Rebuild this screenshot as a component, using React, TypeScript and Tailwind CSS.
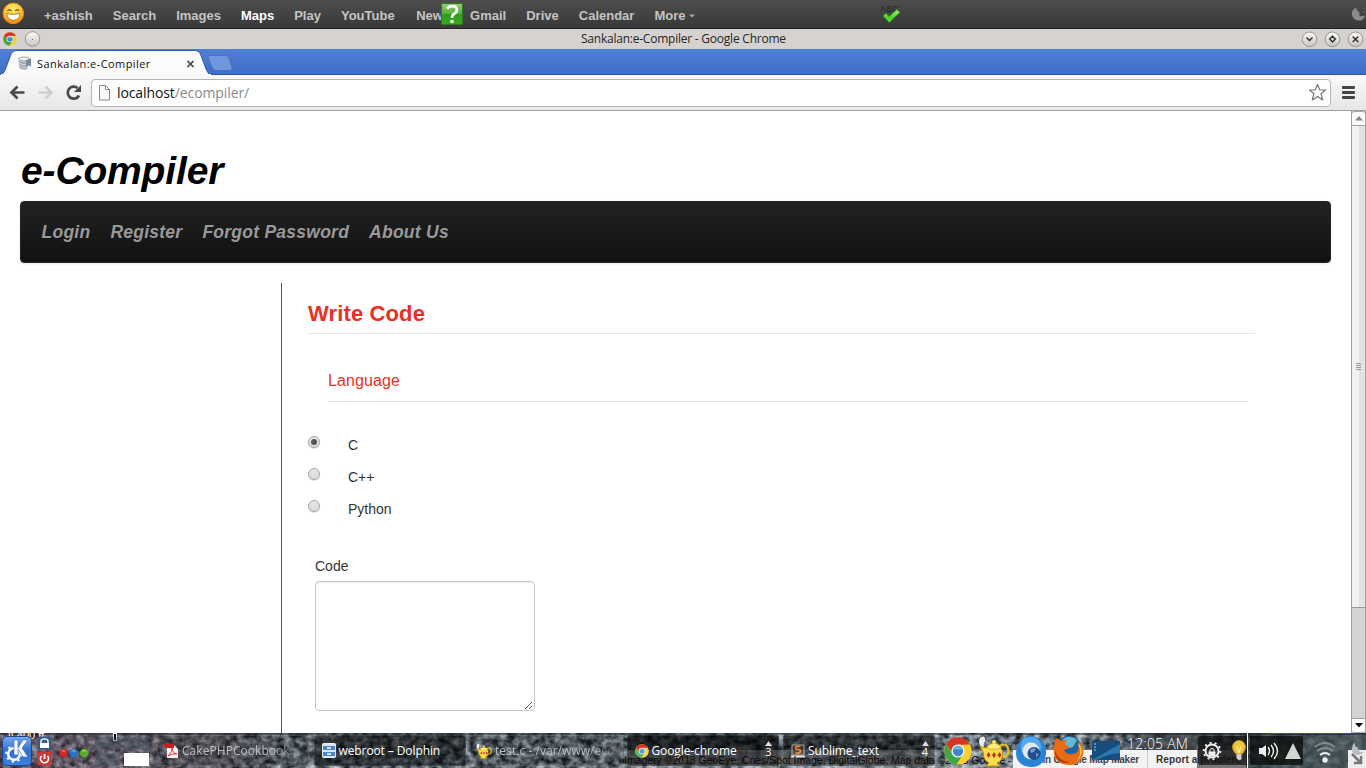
import React from "react";

const ubuntu = "font-['Open_Sans','Noto_Sans',sans-serif]";

function ChromeLogo({ size }: { size: number }) {
  return (
    <svg width={size} height={size} viewBox="0 0 28 28" className="block shrink-0">
      <circle cx="14" cy="14" r="13.6" fill="#fbd02c" />
      <path d="M2.2 7.2 A13.6 13.6 0 0 0 12.5 27.5 L19 17.5 L8.5 17Z" fill="#3fa648" />
      <path d="M2.2 7.2 L8 15.5 L10 10 L14 7.8 L26 7.5 A13.6 13.6 0 0 0 2.2 7.2Z" fill="#d8352a" />
      <circle cx="14" cy="14" r="6.6" fill="#f4f6f8" />
      <circle cx="14" cy="14" r="5.2" fill="#3c86c8" />
      <path d="M9.5 12.5 A4.8 4.8 0 0 1 18.5 12.5Z" fill="#78b3e2" />
    </svg>
  );
}

const googleLinks = ["+ashish", "Search", "Images", "Maps", "Play", "YouTube", "News", "Gmail", "Drive", "Calendar"];

function GoogleBar() {
  return (
    <div className="relative flex h-[29px] shrink-0 items-center border-b border-[#222] bg-linear-to-b from-[#4d4d4d] to-[#393939] pt-[3px] pl-[44px] font-['Liberation_Sans',sans-serif] text-[13px] font-bold text-[#c4c4c4]">
      <svg className="absolute top-[2px] left-[2px]" width="23" height="23" viewBox="0 0 23 23">
        <defs>
          <radialGradient id="smile" cx=".5" cy=".3" r=".7">
            <stop offset="0" stopColor="#fff06e" />
            <stop offset=".65" stopColor="#ffc02e" />
            <stop offset="1" stopColor="#ee7708" />
          </radialGradient>
        </defs>
        <circle cx="11.3" cy="11.4" r="10.3" fill="url(#smile)" stroke="#ef8a16" />
        <path d="M5.5 8.8q2-2.2 4 0M13.3 8.8q2-2.2 4 0" fill="none" stroke="#6f3c09" strokeWidth="1.1" />
        <path d="M4.7 11.5q6.7 1.8 13.4 0q-.8 6.7-6.7 6.7T4.7 11.5Z" fill="#fff" stroke="#9a6a20" strokeWidth=".8" />
      </svg>
      <nav className="flex gap-5 leading-[15px]">
        {googleLinks.map((t) => (
          <a key={t} className={t === "Maps" ? "text-white" : t === "News" ? "ml-[1.500px]" : ""}>{t}</a>
        ))}
        <a className="flex items-center gap-1">
          More
          <svg width="6" height="4" viewBox="0 0 6 4" className="mt-px"><path d="M0 0.5h6L3 3.5Z" fill="#aaa" /></svg>
        </a>
      </nav>
      <svg className="absolute top-[3px] left-[441px]" width="22" height="22" viewBox="0 0 22 22">
        <defs>
          <linearGradient id="help" x1="0" y1="0" x2="0" y2="1">
            <stop offset="0" stopColor="#91cc77" />
            <stop offset=".5" stopColor="#55ae39" />
            <stop offset=".52" stopColor="#319b1d" />
            <stop offset="1" stopColor="#35ad17" />
          </linearGradient>
        </defs>
        <rect x=".5" y=".5" width="21" height="21" rx="1" fill="url(#help)" stroke="#2b7a1c" />
        <path d="M6 5.5Q8 3.2 11.5 3.2Q16 3.2 16 7Q16 9 13.4 10.7Q11 12.2 11 15" fill="none" stroke="#fff" strokeWidth="2.7" />
        <rect x="9.4" y="17" width="3.2" height="3" fill="#fff" />
      </svg>
      <div className="absolute top-[4px] left-[880px] text-[9px] leading-[10px] font-normal tracking-[0.4px] text-[#262626]">ABC</div>
      <svg className="absolute top-[8px] left-[882px]" width="19" height="16" viewBox="0 0 19 16">
        <defs>
          <linearGradient id="tick" x1="0" y1="0" x2="0" y2="1"><stop stopColor="#b7f08a" /><stop offset=".6" stopColor="#4ed02a" /><stop offset="1" stopColor="#6ee03c" /></linearGradient>
        </defs>
        <path d="M1 8L4 5.2L7 8.5L15 1.5L18 4.4L7.3 14.6Z" fill="url(#tick)" stroke="#2b9914" />
      </svg>
      <svg className="absolute top-[6px] left-[1351px]" width="15" height="16" viewBox="0 0 15 16">
        <path d="M5 1.5Q0 4 1 9.5Q3.5 15 9 14.5Q13 13.8 14 9.5Q10 11.2 8 9Q9.5 7 7 5Q5 3.5 5 1.5Z" fill="#8b8b8b" />
        <path d="M7 2h1M9.5 1.8h1M12 2.5h1M13.5 5v2" stroke="#666" />
      </svg>
    </div>
  );
}

function WindowButton({ d }: { d: string }) {
  return (
    <svg width="17" height="17" viewBox="0 0 17 17" className="block">
      <defs>
        <linearGradient id="btn" x1="0" y1="0" x2="0" y2="1">
          <stop offset="0" stopColor="#fafafa" />
          <stop offset="1" stopColor="#c9c6c3" />
        </linearGradient>
      </defs>
      <circle cx="8.5" cy="8.3" r="7.3" fill="url(#btn)" stroke="#8d8a87" strokeWidth=".9" />
      <path d={d} fill="none" stroke="#2d2d2d" strokeWidth="1.4" />
    </svg>
  );
}

function TitleBar() {
  return (
    <div className={`relative flex h-[20px] shrink-0 items-center bg-[#d6d2cf] ${ubuntu}`}>
      <div className="flex w-[581px] items-center gap-[7px] pl-[3px]">
        <ChromeLogo size={14} />
        <svg width="17" height="17" viewBox="0 0 17 17" className="block">
          <circle cx="8.5" cy="8" r="7.3" fill="url(#btn)" stroke="#8d8a87" strokeWidth=".9" />
          <rect x="8" y="8" width="1" height="1" fill="#666" />
        </svg>
      </div>
      <div className="w-[720px] text-[12px] leading-[20px] tracking-[-0.23px] text-[#262626]">Sankalan:e-Compiler - Google Chrome</div>
      <div className="flex gap-[6px]">
        <WindowButton d="M5.5 6.500l3 3l3-3" />
        <WindowButton d="M8.5 5.300L11.3 8.100L8.5 10.900L5.7 8.100Z" />
        <WindowButton d="M5.7 5.400l5.6 5.6M11.3 5.400l-5.6 5.6" />
      </div>
    </div>
  );
}

function TabStrip() {
  return (
    <div className="relative h-[26px] shrink-0 bg-linear-to-b from-[#5181d5] to-[#3e6cc9]">
      <svg className="block" width="1366" height="26" viewBox="0 0 1366 26">
        <path d="M0 25.5H1366" stroke="#2c55a3" />
        <path d="M0 26Q4 25 5.5 20L11 5Q12.5 1.5 16 1.5H195Q199 1.5 200.5 5L206 20Q208 26 212 26Z" fill="#fbfbfb" stroke="#34589c" />
        <path d="M1 26H211" stroke="#f7f7f7" strokeWidth="2" />
        <path d="M210 6.5H226Q228 6.5 229 9L232 18Q233 21.5 230 21.5H216Q213.500 21.500 212.500 19L208 9Q207 6.500 210 6.500Z" fill="#7097dc" stroke="#4a70b6" />
        <g transform="translate(17 7)">
          <path d="M2 3V11Q5 14 10 13L12 10V3Z" fill="#c9d2d9" />
          <ellipse cx="7" cy="3" rx="5.500" ry="2" fill="#eef2f5" stroke="#93a4b1" />
          <path d="M1.500 5.500Q5 8 9 7M2 8.500Q5 11 9 10M2.500 11.500Q6 14 10 12.500" stroke="#7e909e" fill="none" />
          <path d="M9 4L14 2.500V11L12 9L9 11Z" fill="#778b9b" />
        </g>
        <path d="M187.500 12l6 6M193.500 12l-6 6" stroke="#454545" strokeWidth="1.700" />
      </svg>
      <div className={`absolute top-[6px] left-[37px] text-[11px] leading-[18px] tracking-[0.42px] text-[#111] ${ubuntu}`}>Sankalan:e-Compiler</div>
    </div>
  );
}

function Toolbar() {
  return (
    <div className="flex h-[36px] shrink-0 items-center border-b border-[#a0a0a0] bg-linear-to-b from-[#f8f8f8] to-[#e7e7e7]">
      <svg width="91" height="35" viewBox="0 0 91 35" className="block shrink-0" fill="none" strokeWidth="2.700">
        <path d="M24.500 17.500H12M17.500 11.500L11.500 17.500L17.500 23.500" stroke="#494949" />
        <path d="M38.500 17.500H51M45.500 11.500L51.500 17.500L45.500 23.500" stroke="#cfcfcf" />
        <path d="M79 20.500A6 6 0 1 1 77.500 13" stroke="#494949" />
        <path d="M81 10V17H74Z" fill="#494949" />
      </svg>
      <div className="flex h-[28px] w-[1240px] items-center rounded-[4px] border border-[#b6b6b6] bg-white">
        <svg width="25" height="26" viewBox="0 0 25 26" className="block shrink-0">
          <path d="M7.500 5.500h6l4 4v10.500h-10ZM13.500 5.500v4h4" fill="#fafafa" stroke="#868686" />
        </svg>
        <div className={`w-[1191px] text-[14px] leading-[24px] tracking-[-0.1px] text-[#8a8a8a] ${ubuntu}`}>
          <span className="text-[#111]">localhost</span>/ecompiler/
        </div>
        <svg width="19" height="19" viewBox="0 0 19 19" className="block shrink-0">
          <path d="M9.500 1.500L11.800 7H17.500L13 10.700L14.700 17L9.500 13.400L4.300 17L6 10.700L1.500 7H7.200Z" fill="#fff" stroke="#777" strokeWidth="1.200" strokeLinejoin="round" />
        </svg>
      </div>
      <div className="ml-[11px] flex w-[13px] flex-col gap-[2px]">
        <div className="h-[3px] rounded-[1px] bg-[#444]" />
        <div className="h-[3px] rounded-[1px] bg-[#444]" />
        <div className="h-[3px] rounded-[1px] bg-[#444]" />
      </div>
    </div>
  );
}

function Radio({ label, on }: { label: string; on?: boolean }) {
  return (
    <label className="flex h-[32px] text-[14px] leading-[20px] text-[#333]">
      <span className="mt-[3px] mr-[28px] flex size-[12px] items-center justify-center rounded-full border border-[#a5a5a5] bg-linear-to-b from-[#e6e6e6] to-[#dadada] shadow-[0_1px_1px_#ddd]">
        {on && <span className="size-[6px] rounded-full bg-[#555]" />}
      </span>
      <span className="mt-[2px]">{label}</span>
    </label>
  );
}

function Page() {
  return (
    <main className="flex h-full w-[1351px] flex-col overflow-hidden bg-white px-5 font-['Liberation_Sans',sans-serif]">
      <h1 className="mt-[39px] h-[51px] pl-px text-[39px] leading-[42px] font-bold tracking-[-0.15px] italic text-black">e-Compiler</h1>
      <nav className="flex h-[62px] shrink-0 items-center gap-5 rounded-[4px] border border-[#252525] bg-linear-to-b from-[#222] to-[#111] pt-px pl-[20.5px] text-[17.5px] font-bold italic tracking-[0.25px] text-[#999] shadow-[0_1px_3px_rgba(0,0,0,0.1)]">
        <a>Login</a><a>Register</a><a>Forgot Password</a><a>About Us</a>
      </nav>
      <section className="mt-5 ml-[261px] flex h-[450px] shrink-0 flex-col border-l border-[#555] pl-[26px]">
        <h2 className="mt-[10px] h-[41px] w-[947px] border-b border-[#e5e5e5] text-[22px] leading-[42px] font-bold tracking-[0.13px] text-[#ee2e22]">Write Code</h2>
        <h3 className="mt-[27px] ml-5 h-[41px] w-[920px] border-b border-[#e5e5e5] text-[16px] leading-[40px] tracking-[0.1px] text-[#ee2e22]">Language</h3>
        <div className="mt-[31px] flex flex-col">
          <Radio label="C" on />
          <Radio label="C++" />
          <Radio label="Python" />
        </div>
        <div className="mt-[27px] ml-[7px] flex flex-col text-[14px] leading-[20px] text-[#333]">
          <label>Code</label>
          <div className="mt-[5px] flex h-[130px] w-[220px] items-end justify-end rounded-[4px] border border-[#c6c6c6] bg-white shadow-[inset_0_1px_1px_rgba(0,0,0,0.075)]">
            <svg width="9" height="9" viewBox="0 0 9 9"><path d="M0 8L7 1M4 8L7 5" stroke="#555" fill="none" /></svg>
          </div>
        </div>
      </section>
    </main>
  );
}

function ScrollBar() {
  return (
    <div className="flex h-full w-[15px] flex-col border-x border-[#a3a3a3] bg-[#d3d3d3]">
      <div className="flex h-[15px] items-center justify-center rounded-t-[3px] border-y border-[#a3a3a3] bg-[#fafafa]">
        <svg width="8" height="5" viewBox="0 0 8 5"><path d="M0 4.500L4 0L8 4.500Z" fill="#888" /></svg>
      </div>
      <div className="flex h-[482px] flex-col items-center justify-center gap-px border-b border-[#999] bg-linear-to-r from-[#f1f1f1] from-55% to-[#e3e3e3] to-55%">
        <div className="h-px w-[5px] bg-[#999]" />
        <div className="h-px w-[5px] bg-[#999]" />
        <div className="h-px w-[5px] bg-[#999]" />
        <div className="h-px w-[5px] bg-[#999]" />
      </div>
      <div className="h-[110px]" />
      <div className="flex h-[15px] items-center justify-center rounded-b-[3px] border-y border-[#a3a3a3] bg-white">
        <svg width="8" height="5" viewBox="0 0 8 5"><path d="M0 0H8L4 4.500Z" fill="#000" /></svg>
      </div>
    </div>
  );
}

function Terrain() {
  return (
    <svg className="absolute inset-0" width="1366" height="35" viewBox="0 0 1366 35">
      <defs>
        <filter id="rocks" x="0" y="0" width="100%" height="100%" colorInterpolationFilters="sRGB">
          <feTurbulence type="fractalNoise" baseFrequency="0.13 0.16" numOctaves="3" seed="12" />
          <feColorMatrix type="matrix" values="1.5 0 0 0 -.36  1.5 0 0 0 -.32  1.5 0 0 0 -.29  0 0 0 0 1" />
        </filter>
        <linearGradient id="tint">
          <stop offset="0" stopColor="#583c4c" stopOpacity=".55" />
          <stop offset=".17" stopColor="#5c4c55" stopOpacity=".45" />
          <stop offset=".22" stopColor="#5a6670" stopOpacity=".3" />
          <stop offset=".8" stopColor="#5a6670" stopOpacity=".25" />
          <stop offset=".84" stopColor="#3c3d45" stopOpacity=".75" />
          <stop offset=".91" stopColor="#354143" stopOpacity=".75" />
          <stop offset="1" stopColor="#47565a" stopOpacity=".85" />
        </linearGradient>
      </defs>
      <rect width="1366" height="35" filter="url(#rocks)" />
      <rect width="1366" height="35" fill="url(#tint)" />
      <rect y="0" width="1366" height="2" fill="#171b25" opacity=".45" />
      <path d="M1266 .5H1352" stroke="#3d3daf" />
    </svg>
  );
}

function Attribution() {
  return (
    <div className="absolute top-[17px] left-[624px] flex h-[18px] w-[622px] bg-white/15 font-['Liberation_Sans',sans-serif] text-[10.5px] leading-[20px] whitespace-nowrap text-[#080808]">
      <div className="w-[389px] shrink-0 tracking-[-0.03px]">Imagery ©2013 GeoEye, Cnes/Spot Image, DigitalGlobe, Map data ©2013 Google -</div>
      <div className="w-[134px] shrink-0 bg-[#f3f3f3] pl-[9px] text-[10px] font-bold tracking-[-0.22px] text-[#444]">Edit in Google Map Maker</div>
      <div className="w-[99px] shrink-0 border-l border-[#ccc] bg-linear-to-r from-[#f3f3f3] from-50% to-[#777] to-50% pl-[8px] text-[10px] font-bold tracking-[0.1px] text-[#333]">Report a problem</div>
    </div>
  );
}

function PdfIcon() {
  return (
    <svg width="16" height="16" viewBox="0 0 16 16" className="block shrink-0">
      <path d="M4 2h7l4 4v9H4Z" fill="#f5f5f5" />
      <path d="M0 1h11v4H3Z" fill="#d31717" />
      <path d="M5 13Q10 8 9 5Q10 11 14 11Q9 10 5 13Z" fill="none" stroke="#db3c3c" />
    </svg>
  );
}

function CabinetIcon() {
  return (
    <svg width="14" height="15" viewBox="0 0 14 15" className="block shrink-0">
      <rect x=".5" y=".5" width="13" height="14" rx="1" fill="#d9e6f5" stroke="#e9eff7" />
      <path d="M1 3h12v4H1ZM1 9h12v4H1Z" fill="#4b86ca" />
      <path d="M5 5h4M5 11h4" stroke="#fff" strokeWidth="1.500" />
    </svg>
  );
}

function Lamp({ size }: { size: number }) {
  return (
    <svg width={size} height={size} viewBox="0 0 32 32" className="block shrink-0">
      <path d="M3 12Q-1 6 3 2Q8 0 7 6Q5 9 6 12Z" fill="#eee" />
      <ellipse cx="25.500" cy="16" rx="5" ry="6.500" fill="none" stroke="#e8bd20" strokeWidth="2.200" />
      <path d="M1 11L6 12.500Q8 14 10 11.500H22Q25 15 24.500 20Q24 26 19 28L22 31H8L11 28Q5 25 5.500 18Q4 13 1 11Z" fill="#f8dc49" stroke="#bc8d12" />
      <path d="M9 11.500Q16 5 23 11.500L21 14H11Z" fill="#fff07a" stroke="#cda220" strokeWidth=".7" />
      <circle cx="16" cy="7" r="2" fill="#ffe24d" />
      <path d="M10.500 17l2 3-2 3-2-3ZM16 17l2 3-2 3-2-3ZM21.500 17l2 3-2 3-2-3Z" fill="#c83220" />
    </svg>
  );
}

function SublimeIcon() {
  return (
    <svg width="14" height="14" viewBox="0 0 14 14" className="block shrink-0">
      <path d="M1 1h12v10H1Z" fill="#38332e" stroke="#aaa" />
      <path d="M0 12.500h14" stroke="#ddd" strokeWidth="2" />
      <path d="M9.500 2.500H6Q4.500 2.500 4.500 4Q5 5.500 7 5.500Q9.500 5.500 9.500 7Q9.500 9 7.500 9H4.500" fill="none" stroke="#f28b1c" strokeWidth="1.600" />
    </svg>
  );
}

function Task({ icon, label, dim, count, dark }: { icon: React.ReactNode; label: string; dim?: boolean; count?: string; dark?: boolean }) {
  return (
    <div className={`flex h-[31px] w-[152px] shrink-0 items-center gap-[3px] rounded-[3px] border border-white/10 text-[12px] whitespace-nowrap ${dim ? "bg-black/20 pl-[5px] text-[#bdbdc2]" : dark ? "bg-black/70 pr-[5px] pl-[7px] text-white" : "bg-black/55 pr-[5px] pl-[7px] text-white"}`}>
      {icon}
      <span className={`flex-1 leading-[20px] ${dim ? "mask-r-from-70% mask-r-to-100% tracking-[0.05px]" : "tracking-[-0.1px]"}`}>{label}</span>
      {count && (
        <span className="mb-[2px] flex w-[8px] flex-col items-center text-[11px] leading-[12px]">
          <svg width="7" height="5" viewBox="0 0 7 5"><path d="M0 5L3.500 0L7 5Z" fill="#ddd" /></svg>
          {count}
        </span>
      )}
    </div>
  );
}

function Launchers() {
  return (
    <div className="relative z-10 flex w-[181px] shrink-0 items-center gap-[6px]">
      <ChromeLogo size={28} />
      <Lamp size={32} />
      <svg width="31" height="32" viewBox="0 0 31 32" className="block shrink-0">
        <path d="M8 3Q15-2 22 4Q31 7 30 19Q28 32 15 32Q1 31 0 19Q0 8 8 3Z" fill="#2b83d6" />
        <path d="M7 4Q15 0 22 4Q28 12 23 18Q15 8 6 18Q3 10 7 4Z" fill="#55abf0" />
        <circle cx="15" cy="16" r="8.500" fill="#dfe9f2" />
        <circle cx="18" cy="18.500" r="6.500" fill="#204c89" />
        <path d="M14 15Q17 12 20 14L18 17L15 18ZM20 18l3 1-3 4Z" fill="#6e9bcc" />
      </svg>
      <svg width="31" height="31" viewBox="0 0 31 31" className="block shrink-0">
        <circle cx="16" cy="14" r="13" fill="#22659f" />
        <path d="M10 4Q17-1 24 5L20 12L12 14Z" fill="#67b8d7" />
        <path d="M3 3Q6 4 8 6Q11 4 14 5Q11 7 12 10Q16 10 16 13L11 15Q13 20 20 19Q28 18 25 6Q32 12 30 20Q26 31 15 30Q3 29 1 19Q0 12 3 3Z" fill="#e96b12" />
        <path d="M27 10Q32 20 23 27Q30 19 25 9Z" fill="#ffc63d" />
        <path d="M2 16Q5 26 17 27Q6 31 2 20Z" fill="#b9410b" />
      </svg>
      <svg width="28" height="20" viewBox="0 0 28 20" className="ml-[2px] block shrink-0">
        <path d="M0 0H28V19H0Z" fill="#164d7d" />
        <path d="M0 19L28 3V12Q16 13 4 19Z" fill="#2b78ae" />
        <path d="M2 3h2M2 6h2M2 9h2" stroke="#9bcae1" />
      </svg>
    </div>
  );
}

function TaskBar() {
  return (
    <footer className={`relative h-[35px] shrink-0 ${ubuntu}`}>
      <Terrain />
      <div className="absolute -top-[4px] left-[8px] font-['Liberation_Sans',sans-serif] text-[11px] leading-[12px] text-white">|| 400 ft</div>
      <div className="absolute top-0 left-[113px] h-[8px] w-[4px] border border-white bg-black" />
      <div className="relative flex h-full items-center">
        <div className="flex w-[157px] shrink-0 items-center pl-[2px]">
          <svg width="30" height="30" viewBox="0 0 30 30" className="block">
            <defs>
              <linearGradient id="kde" x2="0" y2="1"><stop stopColor="#78aaf1" /><stop offset=".5" stopColor="#2e6fce" /><stop offset="1" stopColor="#3d7ee1" /></linearGradient>
            </defs>
            <rect x=".5" y=".5" width="29" height="29" rx="4" fill="url(#kde)" stroke="#1e448a" />
            <circle cx="12" cy="18" r="5.800" fill="none" stroke="#fff" strokeWidth="2.500" />
            <circle cx="12" cy="18" r="7.700" fill="none" stroke="#fff" strokeWidth="2" strokeDasharray="2.300 3.700" />
            <path d="M12 4h4v8l5-8h5l-6 8l6 9h-5l-5-8v6h-4Z" fill="#fff" stroke="#3473cf" strokeWidth=".7" />
          </svg>
          <svg width="15" height="30" viewBox="0 0 15 30" className="ml-[5px] block">
            <rect x=".5" y=".5" width="14" height="13" rx="1" fill="#365c8a" />
            <path d="M4 8V5Q4 3 7.500 3T11 5V8" fill="none" stroke="#eee" strokeWidth="1.500" />
            <rect x="3" y="7" width="9" height="5" fill="#fff" />
            <rect x=".5" y="15.500" width="14" height="14" rx="1" fill="#c73b35" />
            <path d="M4.500 20a4 4 0 1 0 6 0M7.500 18v5" fill="none" stroke="#fff" strokeWidth="1.700" />
          </svg>
          <svg width="30" height="10" viewBox="0 0 30 10" className="mt-[4px] ml-[7px] block">
            <circle cx="4.500" cy="5" r="4.300" fill="#cf2929" /><circle cx="14.800" cy="5" r="4.300" fill="#2872c9" /><circle cx="25.200" cy="5" r="4.300" fill="#5aae25" />
            <path d="M2 3.500Q4.500 0 7 3.500ZM12 3.500Q14.500 0 17 3.500ZM22.500 3.500Q25 0 27.500 3.500Z" fill="#fff" opacity=".4" />
          </svg>
          <div className="mt-px ml-[6px] grid grid-cols-2 gap-x-[4px] gap-y-[3px]">
            <div className="h-[13px] w-[25px] bg-[#485363]/50" />
            <div className="h-[13px] w-[25px] bg-[#485363]/50" />
            <div className="h-[13px] w-[25px] bg-[#485363]/50" />
            <div className="h-[13px] w-[25px] bg-white" />
          </div>
        </div>
        <div className="flex w-[787px] shrink-0 gap-[4.500px]">
          <Task icon={<PdfIcon />} label="CakePHPCookbook.p" dim />
          <Task icon={<CabinetIcon />} label="webroot – Dolphin" />
          <Task icon={<Lamp size={16} />} label="test.c - /var/www/ecom" dim />
          <Task icon={<ChromeLogo size={14} />} label="Google-chrome" count="3" dark />
          <Task icon={<SublimeIcon />} label="Sublime_text" count="4" />
        </div>
        <Attribution />
        <Launchers />
        <div className="relative z-10 mb-[13px] w-[73px] shrink-0 pl-[2px] text-[14px] leading-[18px] font-light tracking-[0.2px] whitespace-nowrap text-white">12:05 AM</div>
        <div className="relative z-10 flex h-[29px] w-[49px] shrink-0 items-center justify-between rounded-l-[3px] bg-black/60 pr-px pl-[4px]">
          <svg width="20" height="20" viewBox="0 0 20 20" className="block">
            <circle cx="10" cy="10" r="6.500" fill="none" stroke="#eee" strokeWidth="2" />
            <circle cx="10" cy="10" r="8.300" fill="none" stroke="#eee" strokeWidth="2" strokeDasharray="2 3.200" />
            <path d="M8 11V9Q8 7.500 10 7.500T12 9V11" fill="none" stroke="#eee" />
            <rect x="6.500" y="10.500" width="7" height="5" fill="#eee" />
          </svg>
          <svg width="14" height="21" viewBox="0 0 14 21" className="block">
            <path d="M4 14Q0 10 .5 6Q2 .5 7 .5T13.500 6Q14 10 10 14Z" fill="#efc63d" stroke="#bb891c" />
            <path d="M5 6l2 7l2-7" fill="none" stroke="#fff1a2" />
            <path d="M4.500 14h5v5l-2 1.500l-3-2Z" fill="#d1d1d1" />
          </svg>
        </div>
        <div className="mr-[2px] h-full w-px shrink-0 bg-white" />
        <div className="flex h-[29px] w-[53px] shrink-0 items-center justify-between rounded-r-[3px] bg-black/65 pr-[2px] pl-[9px]">
          <svg width="21" height="20" viewBox="0 0 21 20" className="block">
            <path d="M0 7h3l4-3v12l-4-3H0Z" fill="#eee" />
            <path d="M9 6Q12 10 9 14M12 4Q17 10 12 16M15 2Q22 10 15 18" fill="none" stroke="#eee" strokeWidth="1.400" />
          </svg>
          <svg width="16" height="16" viewBox="0 0 16 16" className="block"><path d="M8 0L16 16H0Z" fill="#d6d6d6" /></svg>
        </div>
        <svg width="22" height="23" viewBox="0 0 22 23" className="mt-[5px] ml-[11px] block shrink-0" fill="none" strokeWidth="2">
          <path d="M1 5Q11-3 21 5M3 9Q11 3 19 9" stroke="#858a8b" />
          <path d="M6 13Q11 9 16 13" stroke="#f2f2f2" />
          <circle cx="11" cy="18" r="2.700" fill="#f2f2f2" />
        </svg>
      </div>
      <div className="absolute right-0 bottom-0 flex size-[18px] items-center justify-center bg-[#eee]">
        <svg width="12" height="12" viewBox="0 0 12 12"><path d="M1 1L10 10M10 3V10H3" fill="none" stroke="#777" strokeWidth="2.500" /></svg>
      </div>
      <svg className="absolute top-[9px] left-[1351px]" width="15" height="15" viewBox="0 0 15 15"><path d="M4 0Q-1 5 2 11Q8 16 13 10Q7 11 7 6Q3 5 4 0Z" fill="#b9bdbf" /></svg>
    </footer>
  );
}

export default function App() {
  return (
    <div className="flex h-[768px] w-[1366px] flex-col overflow-hidden bg-white">
      <GoogleBar />
      <TitleBar />
      <TabStrip />
      <Toolbar />
      <div className="flex h-[622px] shrink-0">
        <Page />
        <ScrollBar />
      </div>
      <TaskBar />
    </div>
  );
}
